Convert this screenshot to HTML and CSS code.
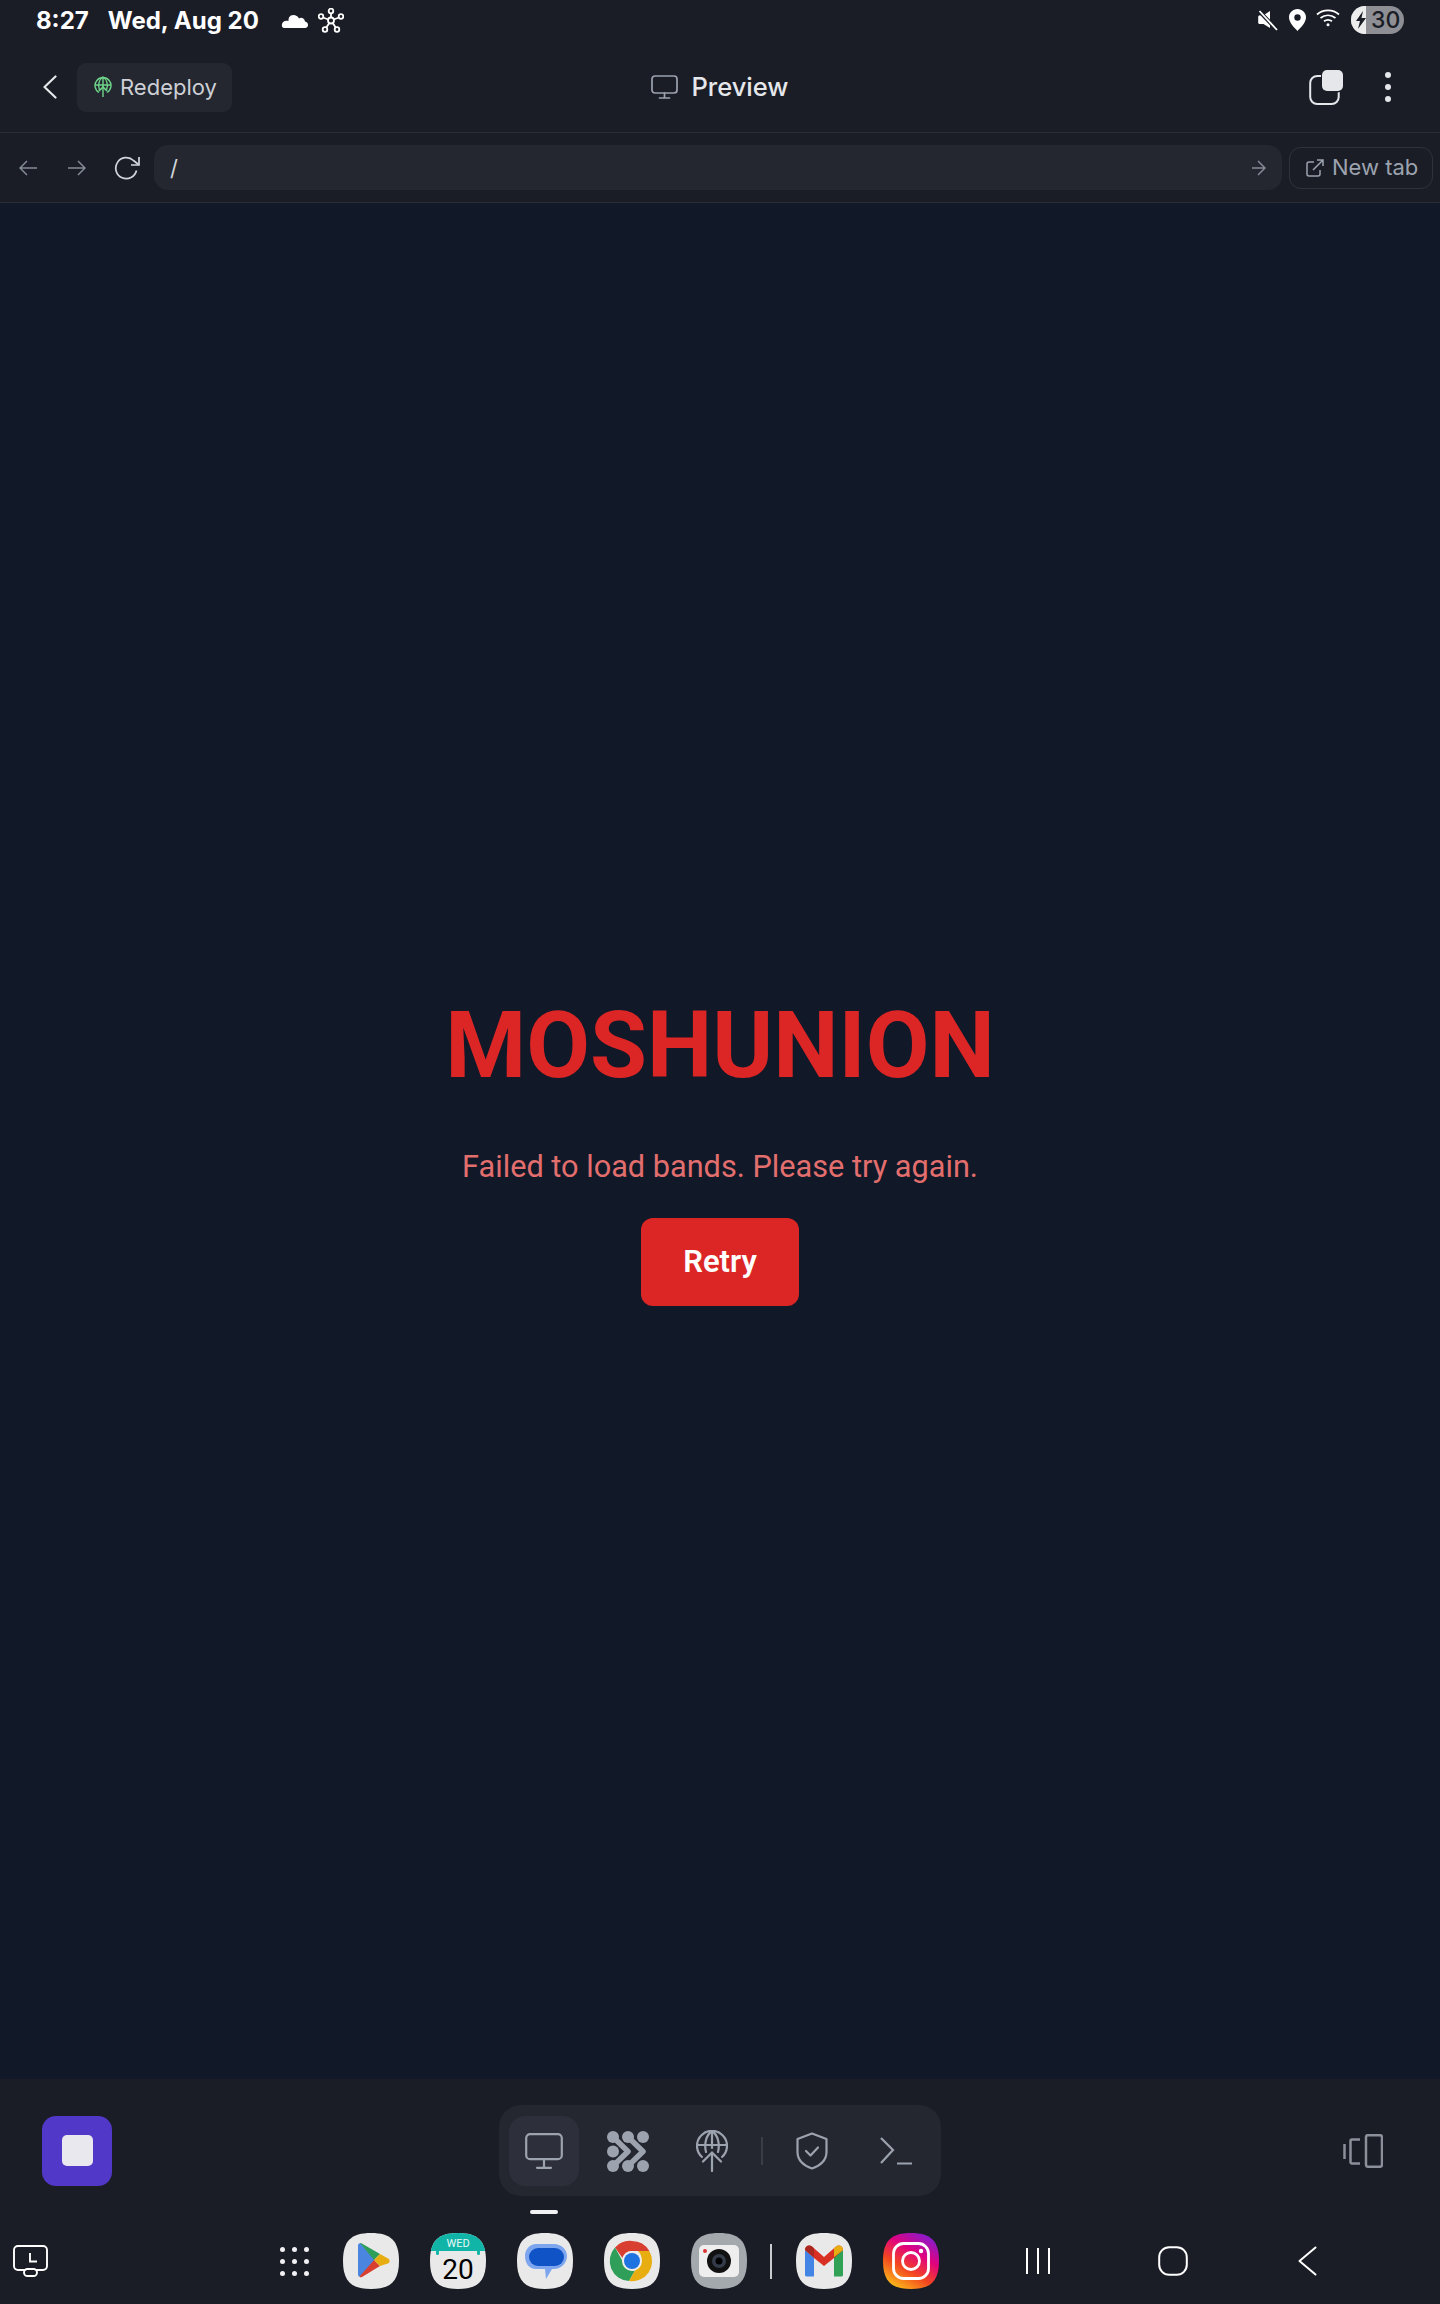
FILE: index.html
```html
<!DOCTYPE html>
<html lang="en">
<head>
<meta charset="utf-8">
<title>Preview</title>
<link rel="stylesheet" href="styles.css">
</head>
<body>
<div class="app">
  <header class="top">
    <div class="status">
      <div class="status-left">
        <span class="time">8:27</span>
        <span class="date">Wed, Aug 20</span>
        <svg class="cloud" width="27" height="15" viewBox="0 0 27 15"><path fill="#fff" d="M3 15h21c4 0 4-6 0-6.500C23.500 5 20 4 18 5.500 16.500 1.500 10 .5 8 4.500 7.500 6 7.500 7 7.500 8 4 7 1.500 8.500 1 11c-.5 2.500.5 4 2 4z"/></svg>
        <svg class="net" width="26" height="25" viewBox="0 0 26 25" fill="none" stroke="#fff" stroke-width="1.800"><circle cx="13" cy="12.500" r="3"/><circle cx="13" cy="3" r="2.300"/><circle cx="3" cy="8.500" r="2.300"/><circle cx="23" cy="8.500" r="2.300"/><circle cx="7" cy="21.500" r="2.300"/><circle cx="19" cy="21.500" r="2.300"/><path d="M13 5.500v4M5 9.500l5.300 2M21 9.500l-5.300 2M8.300 19.500l3-4.500M17.700 19.500l-3-4.500"/></svg>
      </div>
      <div class="status-right">
        <svg width="20" height="21" viewBox="0 0 20 21"><path fill="#fff" d="M12 1v17L5.500 14H2c-1 0-1.800-.7-1.800-1.600V7C.2 6 1 5.300 2 5.300h3.500z"/><path d="M1.500 1.500L19 20" stroke="#1a1d26" stroke-width="4"/><path d="M1.500 1L19 20" stroke="#fff" stroke-width="1.800"/></svg>
        <svg class="pin" width="17" height="22" viewBox="0 0 17 22"><path fill="#fff" fill-rule="evenodd" d="M8.500 0C3.800 0 0 3.700 0 8.300 0 13.500 5 18.500 8.500 22 12 18.500 17 13.500 17 8.300 17 3.700 13.200 0 8.500 0zm0 5.300a3.200 3.200 0 1 1 0 6.400 3.200 3.200 0 0 1 0-6.400z"/></svg>
        <svg class="wifi" width="24" height="19" viewBox="0 0 24 19" fill="none" stroke="#fff" stroke-width="1.700"><path d="M1 6.500C7 1 17 1 23 6.500M4.500 10C9 6.300 15 6.300 19.500 10M8 13.200c2.500-1.800 5.500-1.800 8 0"/><circle cx="12" cy="16.800" r="1.500" fill="#fff" stroke="none"/></svg>
        <div class="battery">
          <div class="battery-fill"><svg width="10" height="18" viewBox="0 0 10 18"><path fill="#1a1d26" d="M7 0L0 10h4l-2 8 8-11H5.500z"/></svg></div>
          <span class="battery-text">30</span>
        </div>
      </div>
    </div>
    <div class="titlebar">
      <div class="title-left">
        <svg width="14" height="24" viewBox="0 0 14 24" fill="none" stroke="#e5e7eb" stroke-width="2.200" stroke-linecap="round" stroke-linejoin="round"><path d="M12.500 1.500L1.500 12l11 10.500"/></svg>
        <button class="redeploy">
          <svg width="18" height="22" viewBox="0 0 18 22" fill="none" stroke="#6fd38a" stroke-width="1.400"><path d="M5 16.500A8 8 0 1 1 13 16.500"/><path d="M1 9h16M9 1v20M5.500 14C3.500 9 5 3.500 9 1c4 2.500 5.500 8 3.500 13"/><path stroke-width="1.700" d="M5 15l4-4 4 4"/></svg>
          <span>Redeploy</span>
        </button>
      </div>
      <div class="title-center">
        <svg width="27" height="24" viewBox="0 0 27 24" fill="none" stroke="#9ca3af" stroke-width="1.700" stroke-linecap="round"><rect x="1" y="1" width="25" height="17" rx="3"/><path d="M13.500 18v4.500M8.500 23h10"/></svg>
        <span class="title-text">Preview</span>
      </div>
      <div class="title-right">
        <svg width="35" height="35" viewBox="0 0 35 35"><rect x="1.200" y="6" width="28.500" height="28" rx="7" fill="none" stroke="#e5e7eb" stroke-width="2"/><rect x="12" y="0" width="22.500" height="22.500" rx="6" fill="#1a1d26"/><rect x="13" y="0" width="21" height="21" rx="5" fill="#e5e7eb"/></svg>
        <div class="dots"><i></i><i></i><i></i></div>
      </div>
    </div>
    <div class="toolbar">
      <svg class="t-back" width="18" height="16" viewBox="0 0 18 16" fill="none" stroke="#858b96" stroke-width="1.500"><path d="M18 8H1M8 1L1 8l7 7"/></svg>
      <svg class="t-forward" width="18" height="16" viewBox="0 0 18 16" fill="none" stroke="#858b96" stroke-width="1.500"><path d="M0 8h17M10 1l7 7-7 7"/></svg>
      <svg class="t-reload" width="26" height="24" viewBox="0 0 26 24" fill="none" stroke="#d1d5db" stroke-width="1.700"><path d="M22.500 14.500A10.500 10.500 0 1 1 19.500 4.500L24.500 8.500"/><path d="M25 1v8h-8"/></svg>
      <div class="url"><span class="url-text">/</span>
        <svg width="14" height="16" viewBox="0 0 14 16" fill="none" stroke="#858b96" stroke-width="1.500"><path d="M0 8h13M6 1l7 7-7 7"/></svg>
      </div>
      <button class="newtab">
        <svg width="18" height="18" viewBox="0 0 18 18" fill="none" stroke="#9ca3af" stroke-width="1.500"><path d="M8 3H3a2 2 0 0 0-2 2v10a2 2 0 0 0 2 2h9a2 2 0 0 0 2-2v-4M7 11L17 1M11 1h6v6"/></svg>
        <span class="newtab-text">New tab</span>
      </button>
    </div>
  </header>

  <main class="content">
    <h1 class="brand">MOSHUNION</h1>
    <p class="error">Failed to load bands. Please try again.</p>
    <button class="retry">Retry</button>
  </main>

  <footer class="bottom">
    <div class="controls">
      <button class="stop"><i></i></button>
      <nav class="tabs">
        <div class="tab active">
          <svg width="38" height="36" viewBox="0 0 38 36" fill="none" stroke="#9ca3af" stroke-width="2.200" stroke-linecap="round"><rect x="1.200" y="1.200" width="35.600" height="25" rx="4"/><path d="M19 26.500v8M12 34.800h14"/></svg>
        </div>
        <div class="tab">
          <svg width="42" height="42" viewBox="0 0 42 42"><g fill="#9ca3af"><circle cx="6" cy="7" r="6"/><circle cx="21" cy="7" r="6"/><circle cx="36" cy="7" r="6"/><circle cx="6" cy="21.500" r="6"/><circle cx="6" cy="36" r="6"/><circle cx="21" cy="36" r="6"/><circle cx="36" cy="36" r="6"/></g><path d="M6 7L21 21.500 6 36M21 7L36 21.500 21 36" fill="none" stroke="#9ca3af" stroke-width="5.500" stroke-linejoin="round"/></svg>
        </div>
        <div class="tab">
          <svg width="32" height="42" viewBox="0 0 32 42" fill="none" stroke="#9ca3af" stroke-width="2.200" stroke-linecap="round"><path d="M6 27A15 15 0 1 1 26 27"/><path d="M1 15h30M16 1v19M10 22C8 14 10 5 16 1c6 4 8 13 6 21"/><path d="M16 41V23M7 31.500l9-9 9 9" stroke="#24272f" stroke-width="6"/><path d="M16 41V23M7 31.500l9-9 9 9"/></svg>
        </div>
        <span class="tab-sep"></span>
        <div class="tab">
          <svg width="32" height="38" viewBox="0 0 32 38" fill="none" stroke="#9ca3af" stroke-width="2.200" stroke-linecap="round" stroke-linejoin="round"><path d="M16 1.500L30.500 7v13c0 8-6 14-14.500 16.500C7.500 34 1.500 28 1.500 20V7z"/><path d="M10 19l4.500 4.500L22 15.500"/></svg>
        </div>
        <div class="tab">
          <svg width="32" height="28" viewBox="0 0 32 28" fill="none" stroke="#9ca3af" stroke-width="2.200"><path d="M1 1l12 12L1 26M17 26.500h15"/></svg>
        </div>
        <span class="tab-indicator"></span>
      </nav>
      <svg class="split" width="40" height="34" viewBox="0 0 40 34" fill="none" stroke="#8b8f99" stroke-width="2.500"><path d="M1.500 10v15M17 5.500H9a1.500 1.500 0 0 0-1.500 1.500v21a1.500 1.500 0 0 0 1.500 1.500h8"/><rect x="23" y="1.200" width="16" height="31.600" rx="2"/></svg>
    </div>

    <div class="dock">
      <svg class="recent" width="35" height="32" viewBox="0 0 35 32" fill="none" stroke="#fff" stroke-width="1.900"><path d="M12 25H5a4 4 0 0 1-4-4V5a4 4 0 0 1 4-4h25a4 4 0 0 1 4 4v16a4 4 0 0 1-4 4h-7"/><path d="M17 8v8.500h7"/><rect x="11" y="24" width="13" height="7" rx="3.500"/></svg>
      <div class="apps"><i></i><i></i><i></i><i></i><i></i><i></i><i></i><i></i><i></i></div>

      <div class="dock-apps">
        <svg width="56" height="56" viewBox="0 0 56 56"><path class="squircle" d="M28 0C48 0 56 8 56 28S48 56 28 56 0 48 0 28 8 0 28 0Z"/><path fill="#4a86e0" d="M15 12.500c0-1.700 1.500-2.700 3-2l14 16.500-14.500 16.500c-1.500.5-2.500-.5-2.500-2z"/><path fill="#2f9e58" d="M17 10l1-.1L37 21l-6 6z"/><path fill="#d83f30" d="M16.500 43.500L31 27l6 6-18 11c-1 .5-2 .5-2.500-.5z"/><path fill="#e8ad10" d="M37 21l8.500 4.800c1.500 1 1.500 3.400 0 4.400L37 33l-6-6z"/></svg>
        <svg class="cal" width="56" height="56" viewBox="0 0 56 56"><defs><clipPath id="calclip"><rect x="0" y="0" width="56" height="18"/></clipPath></defs><path class="squircle" d="M28 0C48 0 56 8 56 28S48 56 28 56 0 48 0 28 8 0 28 0Z"/><path fill="#10b5a8" clip-path="url(#calclip)" d="M28 0C48 0 56 8 56 28S48 56 28 56 0 48 0 28 8 0 28 0Z"/><rect x="6" y="17" width="3" height="5" rx="1.500" fill="#10b5a8"/><rect x="47" y="17" width="3" height="5" rx="1.500" fill="#10b5a8"/><text class="cal-day" x="28" y="14" text-anchor="middle">WED</text><text class="cal-num" x="28" y="46" text-anchor="middle">20</text></svg>
        <svg width="56" height="56" viewBox="0 0 56 56"><path class="squircle" d="M28 0C48 0 56 8 56 28S48 56 28 56 0 48 0 28 8 0 28 0Z"/><path fill="#7ea6ef" d="M19 11h18c7 0 13 5 13 12s-6 13-13 13h-2l-6 10-1-10h-9C12 36 8 30 8 23s5-12 11-12z"/><rect x="12" y="15" width="35" height="18" rx="9" fill="#0f53c7"/></svg>
        <svg width="56" height="56" viewBox="0 0 56 56"><path class="squircle" d="M28 0C48 0 56 8 56 28S48 56 28 56 0 48 0 28 8 0 28 0Z"/><path fill="#d93f31" d="M28 8a20 20 0 0 1 17.300 10H28a10 10 0 0 0-9.500 7L11 14.500A20 20 0 0 1 28 8z"/><path fill="#2f9e58" d="M11 14.500L19.500 30A10 10 0 0 0 31 37.500L25 48A20 20 0 0 1 11 14.500z"/><path fill="#e8ad10" d="M45.300 18A20 20 0 0 1 25 48l8.500-14.500A10 10 0 0 0 34 18z"/><circle cx="28" cy="28" r="10" fill="#eee"/><circle cx="28" cy="28" r="8" fill="#1f73e0"/></svg>
        <svg width="56" height="56" viewBox="0 0 56 56"><path fill="#a4a9ae" d="M28 0C48 0 56 8 56 28S48 56 28 56 0 48 0 28 8 0 28 0Z"/><rect x="8" y="12" width="40" height="32" rx="5" fill="#eeeeee"/><circle cx="14" cy="18" r="2" fill="#d33"/><circle cx="28" cy="28" r="12" fill="#111"/><circle cx="28" cy="28" r="7" fill="#333c48"/><circle cx="28" cy="28" r="3.500" fill="#000"/></svg>
        <span class="dock-sep"></span>
        <svg class="gmail" width="56" height="56" viewBox="0 0 56 56"><path class="squircle" d="M28 0C48 0 56 8 56 28S48 56 28 56 0 48 0 28 8 0 28 0Z"/><path fill="#4285e4" d="M9 17v25c0 1 1 1.500 2 1.500h7V24z"/><path fill="#30a155" d="M47 17v25c0 1-1 1.500-2 1.500h-7V24z"/><path fill="#d93025" d="M9 17c0-4 4-5.500 7-3.500L28 24l12-10.500c3-2 7-.5 7 3.500l-9 8-10 8-10-8z"/><path fill="#a9281f" d="M9 17c0-4 4-5.500 7-3.500l2 1.700V24z"/><path fill="#e8ad10" d="M47 17c0-4-4-5.500-7-3.500l-2 1.700V24z"/></svg>
        <svg class="insta" width="56" height="56" viewBox="0 0 56 56"><defs><linearGradient id="ig" x1="0.200" y1="1" x2="0.800" y2="0"><stop offset="0" stop-color="#fcc21a"/><stop offset="0.350" stop-color="#f4471f"/><stop offset="0.650" stop-color="#e1027e"/><stop offset="1" stop-color="#7e1fd6"/></linearGradient></defs><path fill="url(#ig)" d="M28 0C48 0 56 8 56 28S48 56 28 56 0 48 0 28 8 0 28 0Z"/><rect x="10.500" y="10.500" width="35" height="35" rx="10" fill="none" stroke="#fff" stroke-width="2.800"/><circle cx="28" cy="28" r="8.500" fill="none" stroke="#fff" stroke-width="2.800"/><circle cx="38" cy="18" r="2.200" fill="#fff"/></svg>
      </div>

      <div class="nav">
        <svg width="26" height="28" viewBox="0 0 26 28" stroke="#fff" stroke-width="2"><path d="M2 1v26M13 1v26M24 1v26"/></svg>
        <svg width="30" height="30" viewBox="0 0 30 30" fill="none" stroke="#fff" stroke-width="2"><rect x="1.200" y="1.200" width="27.600" height="27.600" rx="10"/></svg>
        <svg class="nav-back" width="19" height="30" viewBox="0 0 19 30" fill="none" stroke="#fff" stroke-width="2" stroke-linecap="round" stroke-linejoin="round"><path d="M17.500 1.500L1.500 15l16 13.500"/></svg>
      </div>
    </div>
  </footer>
</div>
</body>
</html>
```
FILE: styles.css
```css
* { box-sizing: border-box; }
html, body { margin: 0; padding: 0; }
body { background: #111827; font-family: Inter, "Liberation Sans", sans-serif; }
button { font: inherit; border: 0; padding: 0; background: none; color: inherit; }
svg { display: block; flex: none; }

.app { width: 1440px; height: 2304px; display: flex; flex-direction: column; }

.top { background: #1a1d26; color: #fff; }

.status { height: 40px; padding: 0 36px; display: flex; justify-content: space-between; align-items: center; }
.status-left { display: flex; align-items: center; font-size: 24px; font-weight: 700; color: #fff; }
.date { margin-left: 19px; }
.cloud { margin-left: 22px; }
.net { margin-left: 10px; }
.status-right { display: flex; align-items: center; }
.pin { margin-left: 11px; }
.wifi { margin-left: 10px; margin-top: -5px; }
.battery { margin-left: 11px; width: 53px; height: 28px; border-radius: 14px; background: #8e8f94; overflow: hidden; display: flex; align-items: center; }
.battery-fill { width: 15px; height: 28px; background: #ececec; display: flex; align-items: center; justify-content: flex-end; flex: none; }
.battery-text { margin-left: 5px; color: #1a1d26; font-size: 23px; font-weight: 500; line-height: 28px; }

.titlebar { height: 93px; padding: 2px 43px 0; border-bottom: 1px solid #2a2d38; display: grid; grid-template-columns: 1fr auto 1fr; align-items: center; }
.title-left { display: flex; align-items: center; gap: 20px; }
.redeploy { height: 49px; width: 155px; border-radius: 9px; background: #24272f; color: #cdd0d6; font-size: 22px; display: flex; align-items: center; gap: 8px; padding-left: 17px; }
.title-center { display: flex; align-items: center; gap: 13px; color: #e5e7eb; font-size: 25.500px; font-weight: 500; }
.title-text { margin-bottom: 2px; }
.title-right { display: flex; align-items: center; justify-content: flex-end; gap: 41px; padding-right: 6px; }
.dots { display: flex; flex-direction: column; gap: 6px; }
.dots i { display: block; width: 6px; height: 6px; border-radius: 50%; background: #e5e7eb; }

.toolbar { height: 70px; border-bottom: 1px solid #2a2d38; padding: 0 7px 0 19px; display: flex; align-items: center; }
.t-forward { margin-left: 31px; }
.t-reload { margin-left: 28px; }
.url { margin-left: 14px; width: 1128px; height: 45px; border-radius: 14px; background: #24272f; display: flex; align-items: center; justify-content: space-between; padding: 0 16px; }
.url-text { color: #d1d5db; font-size: 22px; }
.newtab { margin-left: 7px; width: 144px; height: 42px; border: 1px solid #2f323d; border-radius: 12px; color: #9ca3af; font-size: 22px; display: flex; align-items: center; gap: 8px; padding-left: 16px; white-space: nowrap; }
.newtab-text { margin-bottom: 2px; }

.content { flex: 1; padding-top: 21px; background: #111827; display: flex; flex-direction: column; align-items: center; justify-content: center; }
.brand { margin: 0; font-family: Roboto, sans-serif; font-size: 92.500px; line-height: 96px; font-weight: 700; color: #dc2626; }
.error { margin: 53px 0 0; font-family: Roboto, sans-serif; font-size: 30.700px; line-height: 40px; color: #e26e6e; }
.retry { margin-top: 31px; width: 158px; height: 88px; border-radius: 12px; background: #dc2626; color: #fff; font-family: Roboto, sans-serif; font-size: 31px; font-weight: 600; }

.bottom { height: 225px; background: #1a1d26; display: flex; flex-direction: column; }
.controls { height: 143px; padding: 0 42px; display: grid; grid-template-columns: 1fr auto 1fr; align-items: center; }
.stop { width: 70px; height: 70px; border-radius: 14px; background: #5238c8; display: flex; align-items: center; justify-content: center; }
.stop i { display: block; width: 31px; height: 31px; border-radius: 5px; background: #e8e8ee; }
.split { justify-self: end; margin-right: 15px; }
.tabs { position: relative; width: 442px; height: 91px; border-radius: 22px; background: #24272f; padding: 0 10px; display: flex; align-items: center; gap: 14px; }
.tab { width: 70px; height: 70px; border-radius: 16px; display: flex; align-items: center; justify-content: center; }
.tab.active { background: #2d303a; }
.tab-sep { width: 2px; height: 28px; background: #3a3d47; }
.tab-indicator { position: absolute; left: 31px; top: 105px; width: 28px; height: 4px; border-radius: 2px; background: #f1f1f3; }

.dock { flex: 1; padding: 0 0 4px 13px; display: flex; align-items: center; }
.recent { margin-right: 232px; }
.apps { width: 29px; display: grid; grid-template-columns: repeat(3, 5px); gap: 7px; }
.apps i { display: block; width: 5px; height: 5px; border-radius: 50%; background: #f1f1f3; }
.dock-apps { margin-left: 34px; display: flex; align-items: center; gap: 31px; }
.squircle { fill: #e9e9e9; }
.cal-day { fill: #eaf8f6; font-family: Roboto, sans-serif; font-size: 11px; }
.cal-num { fill: #000; font-family: Roboto, sans-serif; font-size: 28px; font-weight: 400; }
.dock-sep { width: 2px; height: 35px; background: #c9cbcf; margin: 0 -7px 0 -8px; }
.nav { margin-left: 86px; display: flex; align-items: center; gap: 107px; }
.nav-back { margin-left: 3px; }
```
